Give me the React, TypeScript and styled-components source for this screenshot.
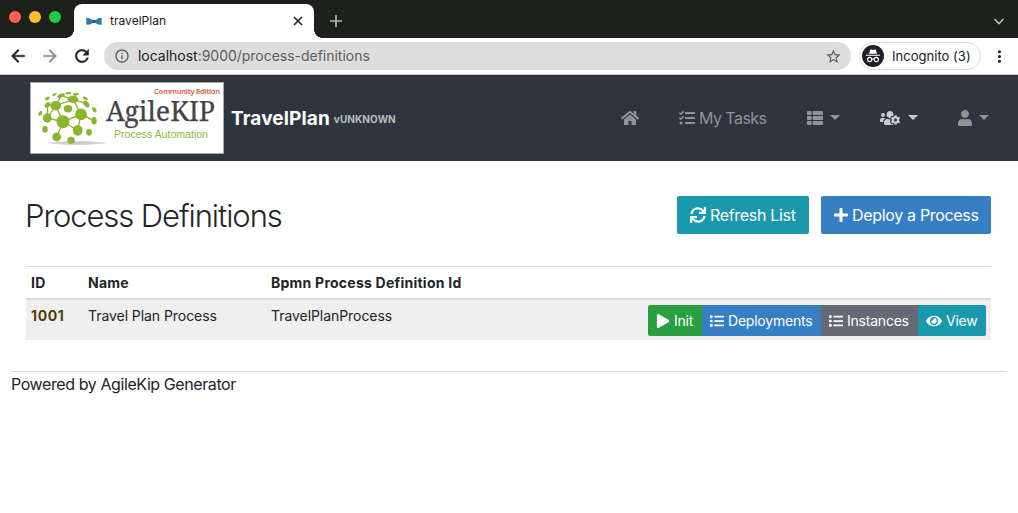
import React from 'react';
import styled, { createGlobalStyle, css } from 'styled-components';
import { FaHome, FaTasks, FaThList, FaUsersCog, FaUser, FaSync, FaPlus, FaPlay, FaList, FaEye } from 'react-icons/fa';
import { MdArrowBack, MdArrowForward, MdRefresh, MdInfoOutline, MdStarBorder, MdMoreVert } from 'react-icons/md';

const GlobalStyle = createGlobalStyle`
  * { box-sizing: border-box; }
  body {
    margin: 0;
    background: #fff;
    color: #212529;
    font: 400 16px/24px Inter, 'Liberation Sans', sans-serif;
    overflow: hidden;
  }
  svg { display: block; flex: none; }
`;

const TabStrip = styled.div`
  height: 38px;
  background: #1e211b;
  display: flex;
  align-items: flex-end;
`;
const Lights = styled.div`
  display: flex;
  gap: 8px;
  width: 74px;
  height: 38px;
  padding: 11px 0 0 9px;
`;
const Light = styled.span<{ $color: string }>`
  width: 12px;
  height: 12px;
  border-radius: 50%;
  background: ${p => p.$color};
`;
const Tab = styled.div`
  position: relative;
  width: 240px;
  height: 34px;
  border-radius: 8px 8px 0 0;
  background: #fff;
  display: flex;
  align-items: center;
  padding: 0 11px 0 12px;
  color: #202124;
  &::before, &::after {
    content: '';
    position: absolute;
    bottom: 0;
    width: 8px;
    height: 8px;
  }
  &::before { left: -8px; background: radial-gradient(circle at 0 0, transparent 7.5px, #fff 8px); }
  &::after { right: -8px; background: radial-gradient(circle at 100% 0, transparent 7.5px, #fff 8px); }
`;
const TabTitle = styled.span`
  flex: 1;
  margin-left: 8px;
  font-size: 12px;
  line-height: 16px;
  letter-spacing: 0.03px;
`;
const NewTab = styled.div`
  flex: 1;
  height: 34px;
  padding: 11px 0 0 16px;
`;
const TabSearch = styled.div`
  height: 34px;
  padding: 14px 13px 0 0;
`;

const Toolbar = styled.div`
  height: 37px;
  border-bottom: 1px solid #c4c4c4;
  display: flex;
  align-items: center;
  padding: 0 9px 0 8px;
  color: #202124;
`;
const NavIcons = styled.div`
  display: flex;
  gap: 12px;
  width: 96px;
  path:not([fill='none']) { stroke: currentColor; stroke-width: 0.5px; }
  .off { color: #929292; }
`;
const Address = styled.div`
  width: 747px;
  height: 28px;
  border-radius: 14px;
  background: #dddddd;
  display: flex;
  align-items: center;
  padding: 0 9px 0 10px;
  color: #5a5d61;
`;
const Url = styled.span`
  flex: 1;
  margin-left: 8px;
  font-size: 14px;
  line-height: 20px;
  letter-spacing: -0.02px;
  b { font-weight: 400; color: #202124; }
`;
const Incognito = styled.div`
  width: 122px;
  height: 28px;
  margin: 0 9px 0 8px;
  border: 1px solid #dcdcdc;
  border-radius: 14px;
  display: flex;
  align-items: center;
  padding-left: 2px;
  gap: 8px;
  font-size: 13px;
  letter-spacing: 0.03px;
  white-space: nowrap;
`;

const Navbar = styled.header`
  height: 86px;
  background: #2f353f;
  display: flex;
  align-items: center;
  padding: 0 31px 0 30px;
`;
const Brand = styled.div`
  display: flex;
  align-items: center;
  flex: 1;
`;
const ProductName = styled.span`
  margin: 1px 0 0 7px;
  color: #fff;
  font-size: 19px;
  font-weight: 700;
  letter-spacing: 0.12px;
`;
const Version = styled.span`
  margin: 2px 0 0 4px;
  color: #b9bcbf;
  font-size: 10px;
  font-weight: 700;
  letter-spacing: 0.1px;
`;
const NavItem = styled.a<{ $width: number; $active?: boolean }>`
  width: ${p => p.$width}px;
  display: flex;
  align-items: center;
  color: ${p => (p.$active ? '#cbcccf' : '#919497')};
  letter-spacing: -0.55px;
`;
const NavLabel = styled.span`
  margin-left: 4px;
`;
const Caret = styled.i<{ $gap?: number }>`
  margin: -1px 0 0 ${p => p.$gap ?? 7}px;
  border: 5px solid transparent;
  border-top-color: currentColor;
  border-bottom: 0;
`;

const Main = styled.main`
  padding: 35px 27px 0 26px;
`;
const Heading = styled.div`
  display: flex;
  align-items: center;
  height: 38px;
  gap: 12px;
`;
const Title = styled.h2`
  flex: 1;
  margin: 1px 0 0 -1px;
  font-size: 31px;
  line-height: 38px;
  font-weight: 300;
  letter-spacing: -1.08px;
`;
const tones = { teal: '#1a98ae', blue: '#367fc5', green: '#289f41', gray: '#636a73' };
const Button = styled.button<{ $tone: keyof typeof tones; $width: number; $small?: boolean }>`
  width: ${p => p.$width}px;
  height: 38px;
  border: 0;
  border-radius: 2px;
  padding: 0 0 0 13px;
  display: flex;
  align-items: center;
  gap: 4px;
  white-space: nowrap;
  color: #fff;
  background: ${p => tones[p.$tone]};
  font: 400 16px/24px Inter, sans-serif;
  letter-spacing: -0.32px;
  ${p => p.$small && css`
    height: 31px;
    padding-left: 8px;
    border-radius: 0;
    font-size: 14px;
    line-height: 21px;
    letter-spacing: -0.22px;
  `}
`;
const PlusIcon = styled(FaPlus)`
  margin: 0 -1px;
`;
const ButtonGroup = styled.div`
  display: flex;
  justify-content: flex-end;
  border-radius: 2px;
  overflow: hidden;
  width: 338px;
  margin-left: auto;
`;
const Table = styled.table`
  width: 965px;
  margin-top: 32px;
  border-collapse: separate;
  border-spacing: 0;
  table-layout: fixed;
  font-size: 15px;
  line-height: 22px;
`;
const HeadCell = styled.th<{ $width?: number }>`
  ${p => p.$width && `width: ${p.$width}px;`}
  height: 34px;
  padding: 0 5px;
  text-align: left;
  font-size: 14px;
  font-weight: 700;
  letter-spacing: 0.24px;
  border-top: 1px solid #d7dce0;
  border-bottom: 2px solid #d7dce0;
`;
const Cell = styled.td`
  height: 40px;
  padding: 5px 5px 4px;
  vertical-align: top;
  background: #efefef;
  font-size: 14px;
  letter-spacing: -0.06px;
`;
const IdLink = styled.a`
  color: #533f03;
  font-weight: 700;
  letter-spacing: 0.6px;
`;
const Footer = styled.footer`
  margin: 31px 12px 0 11px;
  border-top: 1px solid #dcdcdc;
  letter-spacing: -0.41px;
`;

const BowTie = () => (
  <svg width="16" height="9" viewBox="0 0 16 9">
    <path d="M.2 1.300Q.2.800 1 .8 3.500.8 6.500 2.900h3Q12.500.8 15 .8q.8 0 .8.5-.5 3 0 5.700.1.800-.8.800-3 .1-5.500-1.900h-3Q4 7.900 1 7.800.1 7.800.2 7q.5-2.700 0-5.700z" fill="#3478ae" />
    <path d="M6.500 2.900h3v3h-3z" fill="#20608f" />
  </svg>
);

const IncognitoBadge = () => (
  <svg width="22" height="22" viewBox="0 0 22 22">
    <circle cx="11" cy="11" r="11" fill="#202124" />
    <path d="M7 8.800l1.300-4q.3-.6 1-.4l1.700.5 1.700-.5q.7-.2 1 .4l1.300 4zM4 9.700h14v1H4z" fill="#fff" />
    <g fill="none" stroke="#fff" strokeWidth="1.100">
      <circle cx="7.700" cy="14.500" r="2.100" />
      <circle cx="14.300" cy="14.500" r="2.100" />
      <path d="M9.800 14.200q1.200-.8 2.400 0" />
    </g>
  </svg>
);

const Logo = () => (
  <svg width="194" height="72" viewBox="0 0 194 72">
    <defs>
      <radialGradient id="shadow">
        <stop offset="0" stopColor="#c4c4c4" />
        <stop offset=".7" stopColor="#d4d4d4" />
        <stop offset="1" stopColor="#fff" />
      </radialGradient>
    </defs>
    <rect x=".5" y=".5" width="193" height="71" fill="#fff" stroke="#a6a9ad" />
    <ellipse cx="47" cy="61" rx="32" ry="2.200" fill="url(#shadow)" />
    <path
      d="M17.300 36l8.400-12.300L43 17.300l8 15M17.300 36L33 39.700l18-7.400 13 6.400M25.700 23.700l7.300 16L26.700 55M33 39.700l14.700 8.600 3.300-16M43 17.300l13.300 4.400M43 17.300l3-5.600M25.700 23.700L31 13.700l12 3.600M17.300 36l.4-13M25.700 23.700l-8-.7"
      stroke="#8ab62e"
      strokeWidth="1.300"
      fill="none"
    />
    <g fill="#8ab62e">
      <ellipse cx="17.300" cy="36" rx="4.300" ry="4.700" />
      <ellipse cx="25.700" cy="23.700" rx="5.400" ry="4.800" />
      <ellipse cx="43" cy="17.300" rx="5.400" ry="3.700" />
      <ellipse cx="38" cy="26.800" rx="4.300" ry="3.700" />
      <circle cx="51" cy="32.300" r="5.900" />
      <circle cx="33" cy="39.700" r="6.500" />
      <ellipse cx="47.700" cy="48.300" rx="4.900" ry="5.400" />
      <circle cx="26.700" cy="55" r="4.400" />
      <ellipse cx="41" cy="58.300" rx="3.700" ry="3.500" />
      <ellipse cx="15" cy="47.300" rx="2.800" ry="3.400" />
      <ellipse cx="59" cy="50.300" rx="2.900" ry="3.400" />
      <ellipse cx="64" cy="38.700" rx="2.700" ry="3.700" />
      <ellipse cx="64.300" cy="27.700" rx="1.900" ry="2.900" transform="rotate(-30 64.300 27.700)" />
      <ellipse cx="56.300" cy="22" rx="3.800" ry="2.500" transform="rotate(50 56.300 22)" />
      <ellipse cx="55.300" cy="16.300" rx="2.700" ry="1.300" transform="rotate(30 55.300 16.300)" />
      <ellipse cx="46" cy="12" rx="3" ry="1.300" />
      <ellipse cx="38.500" cy="11.200" rx="3" ry="1.200" transform="rotate(-8 38.500 11.200)" />
      <ellipse cx="31" cy="13.700" rx="4" ry="1.900" transform="rotate(-20 31 13.700)" />
      <ellipse cx="24.500" cy="12.500" rx="2.600" ry="1.100" transform="rotate(-30 24.500 12.500)" />
      <ellipse cx="17.300" cy="16.500" rx="2.700" ry="1.500" transform="rotate(-35 17.300 16.500)" />
      <ellipse cx="17.500" cy="23" rx="3.200" ry="2.200" transform="rotate(-45 17.500 23)" />
      <ellipse cx="10.300" cy="31.300" rx="1.600" ry="2.700" transform="rotate(30 10.300 31.300)" />
    </g>
    <text x="124" y="12" fontFamily="Noto Sans" fontWeight="600" fontSize="7.500" fill="#d95d43" textLength="66">Community Edition</text>
    <text x="76" y="39" fontFamily="Noto Serif, Liberation Serif, serif" fontSize="28" fill="#424448" stroke="#424448" strokeWidth=".25" textLength="109" lengthAdjust="spacingAndGlyphs">AgileKIP</text>
    <text x="84" y="56" fontFamily="Liberation Sans" fontSize="10" fill="#8eb936" textLength="94" lengthAdjust="spacingAndGlyphs">Process Automation</text>
  </svg>
);

export default function App() {
  return (
    <>
      <GlobalStyle />
      <TabStrip>
        <Lights>
          <Light $color="#ff5f57" />
          <Light $color="#febc2e" />
          <Light $color="#28c840" />
        </Lights>
        <Tab>
          <BowTie />
          <TabTitle>travelPlan</TabTitle>
          <svg width="10" height="10" viewBox="0 0 10 10" stroke="#202124" strokeWidth="1.600"><path d="M1 1l8 8M9 1L1 9" /></svg>
        </Tab>
        <NewTab>
          <svg width="12" height="12" viewBox="0 0 12 12" stroke="#b4b5b3" strokeWidth="1.700"><path d="M6 0v12M0 6h12" /></svg>
        </NewTab>
        <TabSearch>
          <svg width="12" height="8" viewBox="0 0 12 8" fill="none" stroke="#b8b9b7" strokeWidth="1.600"><path d="M1.500 1L6 5.500 10.500 1" /></svg>
        </TabSearch>
      </TabStrip>
      <Toolbar>
        <NavIcons>
          <MdArrowBack size={20} />
          <MdArrowForward size={20} className="off" />
          <MdRefresh size={20} />
        </NavIcons>
        <Address>
          <MdInfoOutline size={16} />
          <Url><b>localhost</b>:9000/process-definitions</Url>
          <MdStarBorder size={17} />
        </Address>
        <Incognito>
          <IncognitoBadge />
          Incognito (3)
        </Incognito>
        <MdMoreVert size={19} />
      </Toolbar>
      <Navbar>
        <Brand>
          <Logo />
          <ProductName>TravelPlan</ProductName>
          <Version>vUNKNOWN</Version>
        </Brand>
        <NavItem $width={58}><FaHome size={18} /></NavItem>
        <NavItem $width={128}><FaTasks size={16} /><NavLabel>My Tasks</NavLabel></NavItem>
        <NavItem $width={73}><FaThList size={16} /><Caret /></NavItem>
        <NavItem $width={77} $active><FaUsersCog size={20} /><Caret $gap={8} /></NavItem>
        <NavItem $width={30}><FaUser size={16} /><Caret $gap={6} /></NavItem>
      </Navbar>
      <Main>
        <Heading>
          <Title>Process Definitions</Title>
          <Button $tone="teal" $width={132}><FaSync size={16} />Refresh List</Button>
          <Button $tone="blue" $width={170}><PlusIcon size={16} />Deploy a Process</Button>
        </Heading>
        <Table>
          <thead>
            <tr>
              <HeadCell $width={57}>ID</HeadCell>
              <HeadCell $width={183}>Name</HeadCell>
              <HeadCell $width={330}>Bpmn Process Definition Id</HeadCell>
              <HeadCell />
            </tr>
          </thead>
          <tbody>
            <tr>
              <Cell><IdLink>1001</IdLink></Cell>
              <Cell>Travel Plan Process</Cell>
              <Cell>TravelPlanProcess</Cell>
              <Cell>
                <ButtonGroup>
                  <Button $small $tone="green" $width={54}><FaPlay size={14} />Init</Button>
                  <Button $small $tone="blue" $width={119}><FaList size={14} />Deployments</Button>
                  <Button $small $tone="gray" $width={97}><FaList size={14} />Instances</Button>
                  <Button $small $tone="teal" $width={68}><FaEye size={16} />View</Button>
                </ButtonGroup>
              </Cell>
            </tr>
          </tbody>
        </Table>
      </Main>
      <Footer>Powered by AgileKip Generator</Footer>
    </>
  );
}
